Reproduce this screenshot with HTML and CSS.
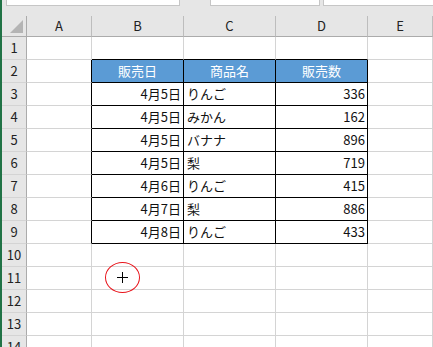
FILE: index.html
```html
<!DOCTYPE html>
<html lang="ja">
<head>
  <meta charset="UTF-8">
  <title>販売データ</title>
  <link rel="stylesheet" href="styles.css">
</head>
<body>
  <div class="app">
    <div class="toolbar">
      <div class="box box-name"></div>
      <div class="box box-mid"></div>
      <div class="box box-formula"></div>
    </div>
    <div class="sheet" id="sheet"></div>
    <div class="mark">
      <span class="cross"></span>
    </div>
  </div>
  <script>
    const cols = ['A', 'B', 'C', 'D', 'E'];
    const sales = [
      ['4月5日', 'りんご', 336],
      ['4月5日', 'みかん', 162],
      ['4月5日', 'バナナ', 896],
      ['4月5日', '梨', 719],
      ['4月6日', 'りんご', 415],
      ['4月7日', '梨', 886],
      ['4月8日', 'りんご', 433]
    ];
    const sheet = document.getElementById('sheet');

    function cell(cls, text) {
      const c = document.createElement('div');
      c.className = 'cell ' + cls;
      c.textContent = text || '';
      sheet.appendChild(c);
      return c;
    }

    cell('corner');
    cols.forEach(l => cell('col-head', l));

    for (let r = 1; r <= 14; r++) {
      cell('row-head', r);
      const rec = sales[r - 3];
      cols.forEach((l, i) => {
        let cls = '';
        let text = '';
        if (r === 2 && i >= 1 && i <= 3) {
          cls = 'th';
          text = ['販売日', '商品名', '販売数'][i - 1];
        } else if (rec && i >= 1 && i <= 3) {
          cls = 'td' + (i !== 2 ? ' num' : '');
          text = rec[i - 1];
        }
        if (r >= 2 && r <= 9 && i === 0) cls += ' edge-right';
        if (r === 1 && i >= 1 && i <= 3) cls += ' edge-bottom';
        cell(cls, text);
      });
    }
  </script>
</body>
</html>
```

FILE: styles.css
```css
body {
  margin: 0;
  font-family: "Noto Sans CJK JP", "Noto Sans", sans-serif;
  background: #fff;
  overflow: hidden;
}

.app {
  position: relative;
  width: 433px;
  height: 347px;
  border-left: 2px solid #217346;
  box-sizing: border-box;
  background: #e6e6e6;
}

.toolbar {
  height: 16px;
  display: flex;
}

.box {
  height: 6px;
  background: #fff;
  border: 1px solid #c6c6c6;
  border-top: none;
  box-sizing: border-box;
}

.box-name { margin-left: 4px; width: 174px; }
.box-mid { margin-left: 30px; width: 110px; }
.box-formula { margin-left: 3px; flex: 1; border-right: none; }

.sheet {
  display: grid;
  grid-template-columns: 25px 65px 92px 92px 92px 1fr;
  grid-template-rows: 21px repeat(14, 23px);
  background: #fff;
}

.cell {
  box-sizing: border-box;
  border-right: 1px solid #d4d4d4;
  border-bottom: 1px solid #d4d4d4;
  font-size: 13px;
  line-height: 22px;
  color: #111;
  padding: 0 3px;
  white-space: nowrap;
  overflow: hidden;
}

.corner,
.col-head,
.row-head {
  background: #e6e6e6;
  color: #222;
  border-color: #ababab;
  border-right-color: #bdbdbd;
}

.corner {
  position: relative;
  border-right-color: #ababab;
}

.corner::after {
  content: "";
  position: absolute;
  right: 3px;
  bottom: 3px;
  border-style: solid;
  border-width: 0 0 13px 13px;
  border-color: transparent transparent #b4b4b4 transparent;
}

.col-head {
  text-align: center;
  font-size: 13px;
  line-height: 20px;
}

.row-head {
  text-align: center;
  font-size: 13px;
  padding: 0;
  border-bottom-color: #d4d4d4;
  border-right-color: #ababab;
}

.th {
  background: #5b9bd5;
  color: #fff;
  text-align: center;
  border-color: #000;
}

.td {
  border-color: #000;
}

.num {
  text-align: right;
  padding-right: 2px;
}

.edge-right { border-right-color: #000; }
.edge-bottom { border-bottom-color: #000; }

.mark {
  position: absolute;
  left: 103px;
  top: 262px;
  width: 35px;
  height: 31px;
  border: 1.5px solid #e8141b;
  border-radius: 50%;
  box-sizing: border-box;
}

.cross {
  position: absolute;
  left: 11px;
  top: 9px;
  width: 11px;
  height: 11px;
}

.cross::before,
.cross::after {
  content: "";
  position: absolute;
  background: #000;
}

.cross::before { left: 0; top: 5px; width: 11px; height: 1px; }
.cross::after { left: 5px; top: 0; width: 1px; height: 11px; }
```
